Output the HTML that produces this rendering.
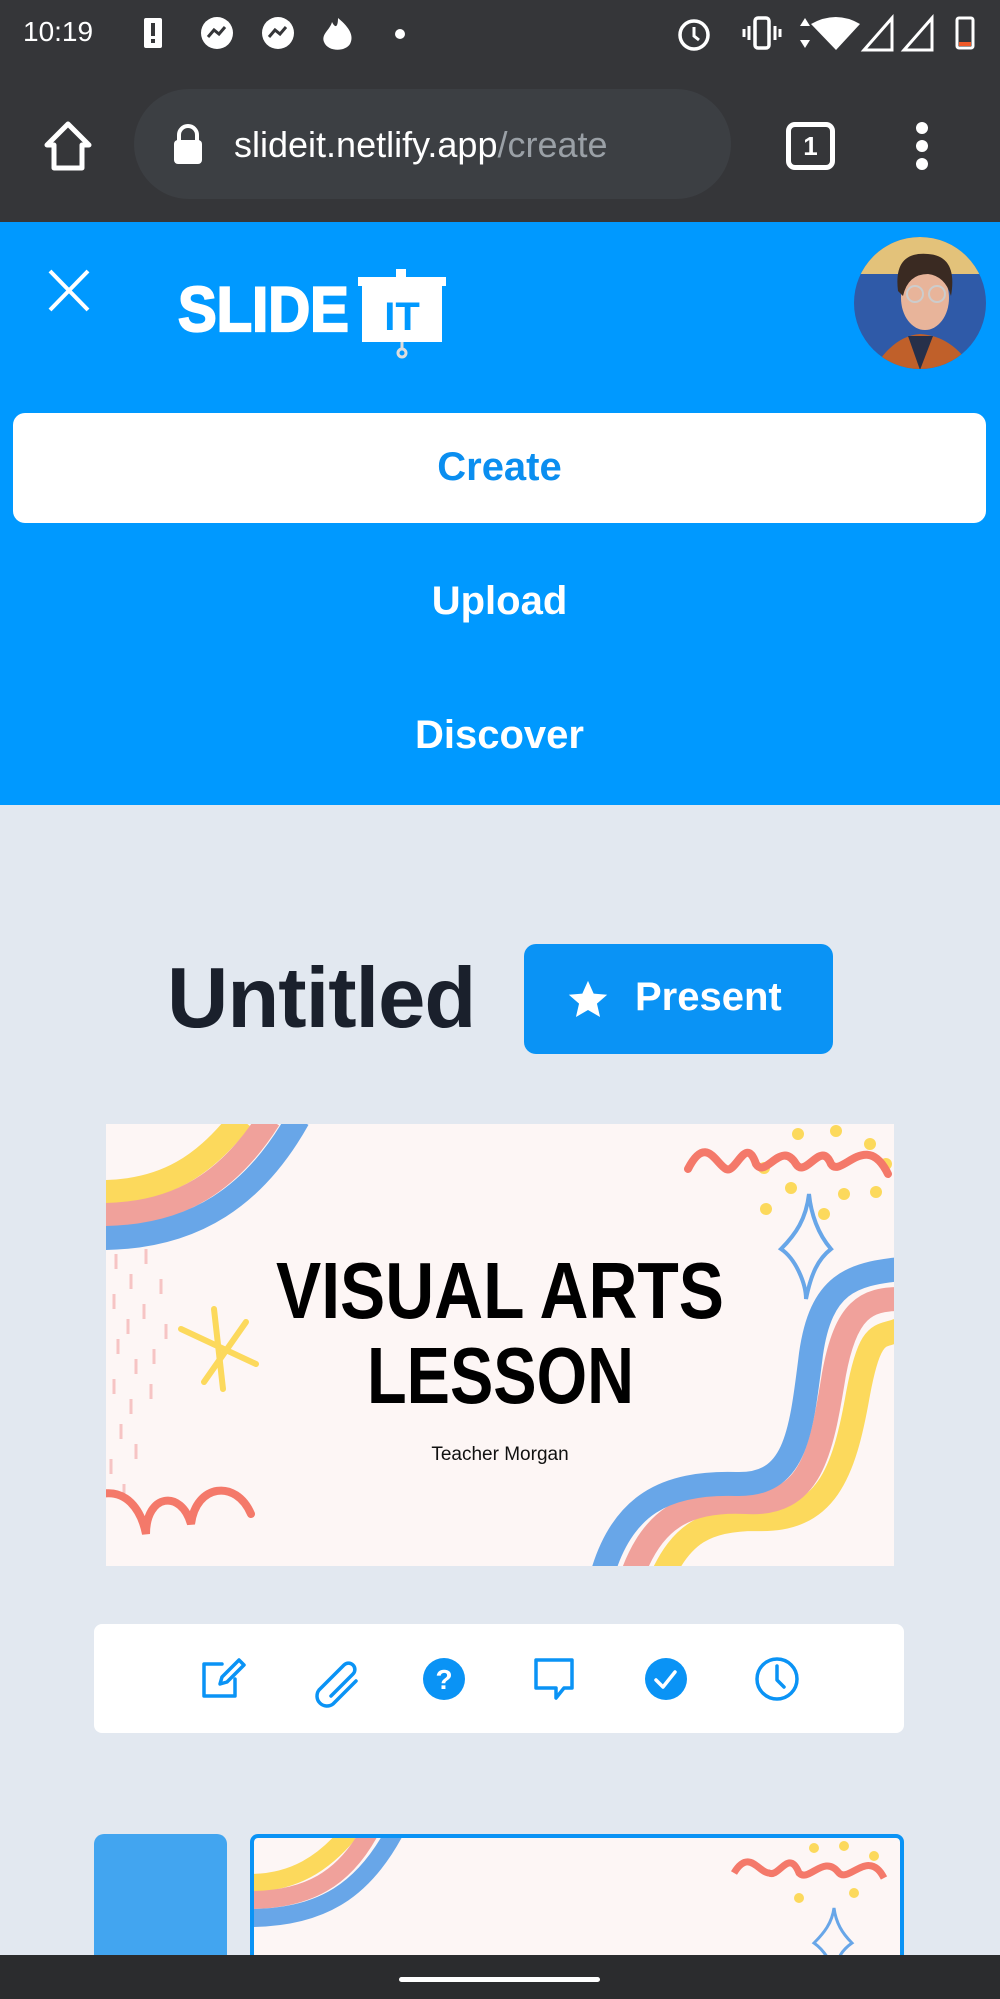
<!DOCTYPE html>
<html><head><meta charset="utf-8">
<style>
*{margin:0;padding:0;box-sizing:border-box}
html,body{width:1000px;height:1999px;overflow:hidden;background:#e2e8f0;font-family:"Liberation Sans",Arial,sans-serif}
.abs{position:absolute}
#top{left:0;top:0;width:1000px;height:222px;background:#353639}
#hdr{left:0;top:222px;width:1000px;height:583px;background:#0099ff}
.nav{position:absolute;left:13px;width:973px;text-align:center;font-weight:bold;font-size:40px;color:#fff}
</style></head><body>
<div id="top" class="abs">
  <div class="abs" style="left:23px;top:16px;color:#fff;font-size:28px">10:19</div>
  <svg class="abs" style="left:140px;top:14px" width="300" height="40" viewBox="0 0 300 40">
    <rect x="4" y="4" width="18" height="30" rx="2" fill="#fff"/><rect x="11" y="9" width="4" height="13" fill="#353639"/><rect x="11" y="25" width="4" height="4" fill="#353639"/>
    <circle cx="77" cy="19" r="16" fill="#fff"/><path d="M68 23 l6-7 5 4 6-7" stroke="#353639" stroke-width="3" fill="none"/>
    <circle cx="138" cy="19" r="16" fill="#fff"/><path d="M129 23 l6-7 5 4 6-7" stroke="#353639" stroke-width="3" fill="none"/>
    <path d="M198 4 C210 14 214 22 210 30 C205 38 188 38 184 28 C181 20 190 16 192 8 C195 14 198 14 198 4z" fill="#fff"/>
    <circle cx="260" cy="20" r="5" fill="#fff"/>
  </svg>
  <svg class="abs" style="left:670px;top:12px" width="320" height="44" viewBox="0 0 320 44">
    <circle cx="24" cy="23" r="14" stroke="#fff" stroke-width="3.5" fill="none"/><path d="M24 15v9l5 4" stroke="#fff" stroke-width="3" fill="none"/>
    <rect x="85" y="6" width="14" height="30" rx="3" stroke="#fff" stroke-width="3.5" fill="none"/><path d="M79 14v14M105 14v14M74 17v8M110 17v8" stroke="#fff" stroke-width="3"/>
    <path d="M135 6l-5 8h10z M135 36l-5-8h10z" fill="#fff"/><path d="M141 12 Q166 -2 190 12 L166 38z" fill="#fff"/>
    <path d="M194 38 L222 6 V38z" stroke="#fff" stroke-width="3" fill="none"/><path d="M234 38 L262 6 V38z" stroke="#fff" stroke-width="3" fill="none"/>
    <rect x="287" y="6" width="16" height="30" rx="2" stroke="#fff" stroke-width="3" fill="none"/><rect x="289" y="30" width="12" height="4" fill="#f05a28"/>
  </svg>
  <svg class="abs" style="left:42px;top:121px" width="52" height="52" viewBox="0 0 52 52"><path d="M5 24 L26 3 L47 24 H40 V47 H12 V24z" stroke="#fff" stroke-width="5" fill="none" stroke-linejoin="round"/></svg>
  <div class="abs" style="left:134px;top:89px;width:597px;height:110px;border-radius:55px;background:#3c3f43"></div>
  <svg class="abs" style="left:172px;top:122px" width="32" height="44" viewBox="0 0 32 44"><path d="M7 19v-6a9 9 0 0 1 18 0v6" stroke="#fff" stroke-width="4" fill="none"/><rect x="2" y="18" width="28" height="24" rx="4" fill="#fff"/></svg>
  <div class="abs" style="left:234px;top:124px;font-size:36px;color:#fff">slideit.netlify.app<span style="color:#9aa0a6">/create</span></div>
  <div class="abs" style="left:786px;top:122px;width:49px;height:48px;border:5px solid #fff;border-radius:9px;color:#fff;font-size:26px;font-weight:bold;text-align:center;line-height:38px">1</div>
  <svg class="abs" style="left:910px;top:120px" width="24" height="52"><circle cx="12" cy="8" r="6" fill="#fff"/><circle cx="12" cy="26" r="6" fill="#fff"/><circle cx="12" cy="44" r="6" fill="#fff"/></svg>
</div>
<div id="hdr" class="abs">
  <svg class="abs" style="left:48px;top:47px" width="42" height="43"><path d="M2 2 L40 41 M40 2 L2 41" stroke="#fff" stroke-width="4"/></svg>
  <div class="abs" style="left:178px;top:52px;font-size:58px;font-weight:900;color:#fff;-webkit-text-stroke:2px #fff;transform:scaleY(1.08);transform-origin:top left">SLIDE</div>
  <svg class="abs" style="left:356px;top:45px" width="92" height="92" viewBox="0 0 92 92">
    <rect x="2" y="10" width="88" height="9" fill="#fff"/><rect x="6" y="19" width="80" height="56" fill="#fff"/><rect x="40" y="2" width="10" height="10" fill="#fff"/>
    <text x="46" y="63" font-family="Liberation Sans" font-weight="bold" font-size="40" fill="#0099ff" text-anchor="middle">IT</text>
    <path d="M46 75v8" stroke="#ddd" stroke-width="3"/><circle cx="46" cy="86" r="4" stroke="#ddd" stroke-width="3" fill="none"/>
  </svg>
  <svg class="abs" style="left:853px;top:14px" width="134" height="134" viewBox="0 0 134 134">
    <defs><clipPath id="c"><circle cx="67" cy="67" r="66"/></clipPath></defs>
    <g clip-path="url(#c)"><rect width="134" height="134" fill="#2f5aa8"/><rect width="134" height="38" fill="#e3c27a"/>
    <path d="M20 134 Q40 100 67 98 Q100 100 120 134z" fill="#c0602a"/><path d="M55 100 L67 134 L80 100z" fill="#26304a"/>
    <ellipse cx="72" cy="62" rx="24" ry="32" fill="#e8b49a"/><path d="M45 55 Q40 15 75 18 Q105 20 98 60 Q92 40 75 38 Q55 38 50 60z" fill="#3a2a22"/>
    <circle cx="62" cy="58" r="8" stroke="#ccc" stroke-width="2" fill="none"/><circle cx="84" cy="58" r="8" stroke="#ccc" stroke-width="2" fill="none"/></g>
  </svg>
  <div class="abs" style="left:13px;top:191px;width:973px;height:110px;background:#fff;border-radius:12px"></div>
  <div class="nav" style="top:223px;color:#0a8ef0">Create</div>
  <div class="nav" style="top:357px">Upload</div>
  <div class="nav" style="top:491px">Discover</div>
</div>
<div class="abs" style="left:167px;top:950px;font-size:85px;font-weight:bold;color:#1a202c;letter-spacing:-1px">Untitled</div>
<div class="abs" style="left:524px;top:944px;width:309px;height:110px;background:#0a93f5;border-radius:12px;color:#fff;font-weight:bold;font-size:40px">
  <svg class="abs" style="left:42px;top:35px" width="44" height="42" viewBox="0 0 24 23"><path d="M12 1l3.1 7 7.4.6-5.6 4.9 1.7 7.3L12 17l-6.6 3.8 1.7-7.3L1.5 8.6l7.4-.6z" fill="#fff"/></svg>
  <div class="abs" style="left:111px;top:31px">Present</div>
</div>
<svg class="abs" style="left:106px;top:1124px" width="788" height="442" viewBox="0 0 788 442">
  <rect width="788" height="442" fill="#fdf6f5"/>
  <g fill="none" stroke-width="24">
    <path d="M-5 68 C60 68 100 40 135 -5" stroke="#fcd95c"/>
    <path d="M-5 91 C75 91 125 55 163 -5" stroke="#f0a19b"/>
    <path d="M-5 114 C90 114 150 70 192 -5" stroke="#68a6e8"/>
    <path d="M555 455 C575 410 600 395 650 395 C720 398 738 350 752 270 C765 200 775 215 795 205" stroke="#fcd95c"/>
    <path d="M525 455 C545 395 580 375 640 378 C705 382 715 330 728 250 C740 185 760 175 795 175" stroke="#f0a19b"/>
    <path d="M495 455 C515 380 560 358 630 360 C690 362 695 310 705 230 C715 160 745 150 795 145" stroke="#68a6e8"/>
  </g>
  <g fill="#fcd95c"><circle cx="692" cy="10" r="6"/><circle cx="730" cy="7" r="6"/><circle cx="764" cy="20" r="6"/><circle cx="780" cy="40" r="6"/><circle cx="658" cy="44" r="6"/><circle cx="770" cy="68" r="6"/><circle cx="685" cy="64" r="6"/><circle cx="738" cy="70" r="6"/><circle cx="660" cy="85" r="6"/><circle cx="718" cy="90" r="6"/></g>
  <path d="M582 45 C600 10 610 40 620 45 C630 50 640 10 650 40 C660 55 675 15 690 40 C700 55 715 15 725 40 C735 55 760 5 782 50" stroke="#f4796a" stroke-width="8" fill="none" stroke-linecap="round"/>
  <path d="M703 70 C700 95 690 110 675 125 C690 135 700 160 700 175 C705 150 712 135 725 125 C712 110 705 90 703 70z" stroke="#68a6e8" stroke-width="4" fill="none"/>
  <g stroke="#fcd95c" stroke-width="6" stroke-linecap="round"><path d="M108 185 L117 265"/><path d="M75 205 L150 240"/><path d="M140 198 L98 258"/></g>
  <g stroke="#f6c4c4" stroke-width="3"><path d="M10 130v15M25 150v15M40 125v15M55 155v15M8 170v15M22 195v15M38 180v15M60 200v15M12 215v15M30 235v15M48 225v15M8 255v15M25 275v15M45 260v15M15 300v15M30 320v15M5 335v15M18 360v15"/></g>
  <path d="M-5 370 C20 365 35 385 40 410 C40 370 75 365 85 400 C90 360 130 355 145 390" stroke="#f4796a" stroke-width="8" fill="none" stroke-linecap="round"/>
  <text x="170" y="194" font-family="Liberation Sans" font-weight="bold" font-size="80" textLength="448" lengthAdjust="spacingAndGlyphs">VISUAL ARTS</text>
  <text x="261" y="279" font-family="Liberation Sans" font-weight="bold" font-size="80" textLength="267" lengthAdjust="spacingAndGlyphs">LESSON</text>
  <text x="394" y="336" font-family="Liberation Sans" font-size="19" text-anchor="middle" fill="#111">Teacher Morgan</text>
</svg>
<div class="abs" style="left:94px;top:1624px;width:810px;height:109px;background:#fff;border-radius:8px"></div>
<svg class="abs" style="left:94px;top:1624px" width="810" height="109" viewBox="0 0 810 109" fill="none" stroke="#0a93f5" stroke-width="3.5" stroke-linecap="round" stroke-linejoin="round">
  <path d="M128 40 H110 V72 H141 V55"/><path d="M145 36 l5 5 -17 17 -7 2 2 -7z"/>
  <path d="M237 72 l22 -22 a6 6 0 0 0 -9 -9 l-25 25 a10 10 0 0 0 14 14 l23 -23"/>
  <circle cx="350" cy="55" r="21" fill="#0a93f5" stroke="none"/>
  <text x="350" y="65" font-family="Liberation Sans" font-weight="bold" font-size="28" fill="#fff" stroke="none" text-anchor="middle">?</text>
  <path d="M442 36 H478 V64 H470 L462 74 V64 H442z"/>
  <circle cx="572" cy="55" r="21" fill="#0a93f5" stroke="none"/><path d="M562 56 l7 7 12 -15" stroke="#fff"/>
  <circle cx="683" cy="55" r="20"/><path d="M683 42 V56 l7 7"/>
</svg>
<div class="abs" style="left:94px;top:1834px;width:133px;height:140px;background:#42a5f0;border-radius:10px"></div>
<div class="abs" style="left:250px;top:1834px;width:654px;height:140px;border:4px solid #0a93f5;border-radius:8px;background:#fdf6f5;overflow:hidden">
  <svg width="650" height="140" viewBox="0 0 650 140">
    <path d="M-5 45 C40 45 70 25 95 -5" stroke="#fcd95c" stroke-width="18" fill="none"/>
    <path d="M-5 62 C55 62 90 40 115 -5" stroke="#f0a19b" stroke-width="18" fill="none"/>
    <path d="M-5 80 C70 80 110 50 140 -5" stroke="#68a6e8" stroke-width="18" fill="none"/>
    <path d="M480 35 C495 10 505 35 515 35 C525 40 535 10 545 35 C555 45 570 15 585 35 C595 45 615 10 630 40" stroke="#f4796a" stroke-width="7" fill="none"/>
    <g fill="#fcd95c"><circle cx="560" cy="10" r="5"/><circle cx="590" cy="8" r="5"/><circle cx="620" cy="18" r="5"/><circle cx="545" cy="60" r="5"/><circle cx="600" cy="55" r="5"/></g>
    <path d="M580 70 C578 85 570 95 560 105 C570 112 578 125 580 135 C583 120 588 112 598 105 C588 95 582 85 580 70z" stroke="#68a6e8" stroke-width="3" fill="none"/>
    <text x="130" y="160" font-family="Liberation Sans" font-weight="bold" font-size="60">VISUAL ARTS</text>
  </svg>
</div>
<div class="abs" style="left:0;top:1955px;width:1000px;height:44px;background:#2b2c2e"></div>
<div class="abs" style="left:399px;top:1977px;width:201px;height:5px;background:#fff;border-radius:3px"></div>
</body></html>
